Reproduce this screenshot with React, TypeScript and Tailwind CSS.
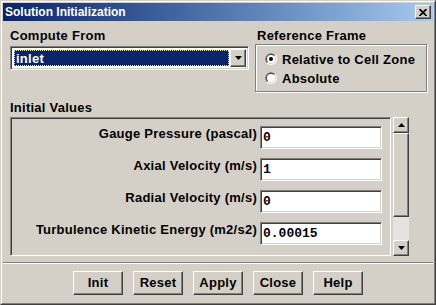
import React from "react";

const raised =
  "border border-t-white border-l-white border-r-[#404040] border-b-[#404040] shadow-[inset_-1px_-1px_0_#808080]";
const sunken =
  "border border-t-[#808080] border-l-[#808080] border-r-white border-b-white shadow-[inset_1px_1px_0_#404040,inset_-1px_-1px_0_#d4d0c8]";

function Radio({ checked }: { checked: boolean }) {
  const wedge = (r: number) => {
    const d = r * 0.7071;
    return `M ${6 - d} ${6 + d} A ${r} ${r} 0 0 1 ${6 + d} ${6 - d} Z`;
  };
  return (
    <svg width="12" height="12" viewBox="0 0 12 12" className="shrink-0">
      <circle cx="6" cy="6" r="6" fill="#ffffff" />
      <path d={wedge(6)} fill="#808080" />
      <circle cx="6" cy="6" r="5" fill="#d4d0c8" />
      <path d={wedge(5)} fill="#404040" />
      <circle cx="6" cy="6" r="4" fill="#ffffff" />
      {checked && <circle cx="6" cy="6" r="2" fill="#000000" />}
    </svg>
  );
}

function Entry({ value }: { value: string }) {
  return (
    <div
      className={`${sunken} w-[122px] h-[23px] bg-white flex items-center pl-[2px] font-['Liberation_Mono',monospace] text-[13px] font-bold text-black leading-none`}
    >
      {value}
    </div>
  );
}

function Btn({ label }: { label: string }) {
  return (
    <div
      className={`${raised} w-[50px] h-[24px] bg-[#d4d0c8] flex items-center justify-center text-[13px] font-bold tracking-[0.25px] text-black`}
    >
      {label}
    </div>
  );
}

export default function App() {
  const rows = [
    ["Gauge Pressure (pascal)", "0"],
    ["Axial Velocity (m/s)", "1"],
    ["Radial Velocity (m/s)", "0"],
    ["Turbulence Kinetic Energy (m2/s2)", "0.00015"],
  ];
  return (
    <div className="w-[436px] h-[305px] bg-[#d4d0c8] border border-t-[#d4d0c8] border-l-[#d4d0c8] border-r-[#404040] border-b-[#404040] overflow-hidden font-['Liberation_Sans',Arial,sans-serif] text-black">
      <div className="h-full border border-t-white border-l-white border-r-[#808080] border-b-[#808080] p-px flex flex-col">
        {/* Title bar */}
        <div className="h-[18px] shrink-0 flex items-center justify-between bg-gradient-to-r from-[#0a246a] to-[#a6caf0] pl-[2px]">
          <span className="text-white font-bold text-[12px] leading-none">Solution Initialization</span>
          <div className={`${raised} w-[16px] h-[14px] bg-[#d4d0c8] mr-[2px] flex items-center justify-center`}>
            <svg width="8" height="7" viewBox="0 0 8 7">
              <path d="M0.5 0 L7.5 7 M7.5 0 L0.5 7" stroke="#000" strokeWidth="1.7" />
            </svg>
          </div>
        </div>

        {/* Row 1 */}
        <div className="h-[80px] shrink-0 flex pl-[7px] pt-[8px] gap-[6px]">
          <div className="w-[239px] flex flex-col">
            <div className="h-[14px] leading-[14px] text-[13px] font-bold tracking-[0.25px]">Compute From</div>
            <div className={`${sunken} mt-[3px] h-[24px] bg-white p-[2px] flex`}>
              <div className="flex-1 flex p-px gap-px">
                <div className="flex-1 bg-[#0a246a] border border-dotted border-[#e8e4b0] flex items-center pl-px text-white text-[13px] font-bold tracking-[0.25px] leading-none">
                  inlet
                </div>
              </div>
              <div className={`${raised} w-[16px] bg-[#d4d0c8] flex items-center justify-center`}>
                <svg width="7" height="4" viewBox="0 0 7 4">
                  <path d="M0 0 H7 L3.5 4 Z" fill="#000" />
                </svg>
              </div>
            </div>
          </div>
          <div className="w-[172px] flex flex-col">
            <div className="h-[14px] leading-[14px] text-[13px] font-bold tracking-[0.25px] pl-[2px]">Reference Frame</div>
            <div className="mt-px h-[48px] border border-[#808080] shadow-[inset_1px_1px_0_#fff,1px_1px_0_#fff] flex flex-col pl-[9px] pt-[6px] gap-[3px]">
              <div className="h-[16px] flex items-center gap-[5px]">
                <Radio checked />
                <span className="text-[13px] font-bold tracking-[0.25px] leading-none">Relative to Cell Zone</span>
              </div>
              <div className="h-[16px] flex items-center gap-[5px]">
                <Radio checked={false} />
                <span className="text-[13px] font-bold tracking-[0.25px] leading-none">Absolute</span>
              </div>
            </div>
          </div>
        </div>

        {/* Initial values */}
        <div className="pl-[7px] h-[14px] leading-[14px] text-[13px] font-bold tracking-[0.25px]">Initial Values</div>
        <div className="mt-[2px] flex pl-[7px] gap-[2px]">
          <div className={`${sunken} w-[381px] h-[139px] flex flex-col pt-[8px] pr-[8px] gap-[9px]`}>
            {rows.map(([label, value]) => (
              <div key={label} className="h-[23px] flex items-start justify-end gap-[3px]">
                <span className="text-[13px] font-bold tracking-[0.25px] leading-[14px] mt-px">{label}</span>
                <Entry value={value} />
              </div>
            ))}
          </div>
          <div className="w-[16px] h-[139px] flex flex-col">
            <div className={`${raised} h-[16px] bg-[#d4d0c8] flex items-center justify-center`}>
              <svg width="7" height="4" viewBox="0 0 7 4">
                <path d="M0 4 H7 L3.5 0 Z" fill="#000" />
              </svg>
            </div>
            <div className={`${raised} h-[84px] bg-[#d4d0c8]`} />
            <div className="flex-1 bg-[#e6e3de]" />
            <div className={`${raised} h-[16px] bg-[#d4d0c8] flex items-center justify-center`}>
              <svg width="7" height="4" viewBox="0 0 7 4">
                <path d="M0 0 H7 L3.5 4 Z" fill="#000" />
              </svg>
            </div>
          </div>
        </div>

        {/* Separator */}
        <div className="mt-[6px] border-t border-t-[#808080] border-b border-b-white" />

        {/* Buttons */}
        <div className="mt-[7px] flex justify-center gap-[10px]">
          <Btn label="Init" />
          <Btn label="Reset" />
          <Btn label="Apply" />
          <Btn label="Close" />
          <Btn label="Help" />
        </div>
      </div>
    </div>
  );
}
